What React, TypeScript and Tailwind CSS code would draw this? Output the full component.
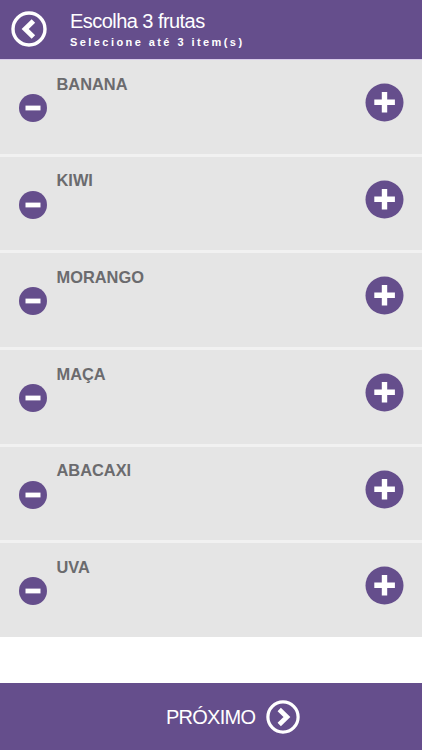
import { useState } from 'react'

const MAX_ITEMS = 3
const fruits = ['BANANA', 'KIWI', 'MORANGO', 'MAÇA', 'ABACAXI', 'UVA']

function ArrowCircle({ direction, className }: { direction: 'left' | 'right'; className: string }) {
  return (
    <svg className={className} viewBox="0 0 36 36" fill="none" stroke="#fff">
      <circle cx="18" cy="18" r="16" strokeWidth="3.4" />
      <path d={direction === 'left' ? 'M22.4 10 14.2 18l8.2 8' : 'M14 10 22.2 18l-8.2 8'} strokeWidth="5" />
    </svg>
  )
}

export default function App() {
  const [selected, setSelected] = useState<string[]>([])

  const add = (fruit: string) => {
    if (selected.length < MAX_ITEMS) setSelected([...selected, fruit])
  }

  const remove = (fruit: string) => {
    const index = selected.lastIndexOf(fruit)
    if (index >= 0) setSelected(selected.filter((_, i) => i !== index))
  }

  return (
    <div className="flex h-[750px] w-full flex-col overflow-hidden bg-white font-['Liberation_Sans',sans-serif]">
      <header className="flex h-[60px] shrink-0 items-start border-b border-[#d9cbea] bg-[#654e8c] pl-[11px] text-white">
        <button className="mt-[11px]">
          <ArrowCircle direction="left" className="h-9 w-9" />
        </button>
        <div className="ml-[23px] pt-[10px]">
          <h1 className="text-[20px] leading-[23px] tracking-[-0.55px]">Escolha 3 frutas</h1>
          <p className="mt-[3px] text-[11px] leading-[13px] font-bold tracking-[2.43px]">Selecione até 3 item(s)</p>
        </div>
      </header>

      {/* Fruit list */}
      <ul className="flex h-[577px] shrink-0 flex-col">
        {fruits.map((fruit) => (
          <li
            key={fruit}
            className="flex flex-1 items-start border-b-3 border-[#f1f1f1] bg-[#e5e5e5] pr-[18px] pl-[19px] last:border-b-0"
          >
            <button className="mt-[34px]" onClick={() => remove(fruit)}>
              <svg className="h-7 w-7" viewBox="0 0 28 28">
                <circle cx="14" cy="14" r="14" fill="#654e8c" />
                <path d="M6.5 14h15" stroke="#fff" strokeWidth="4.8" />
              </svg>
            </button>
            <span className="mt-[13.6px] ml-[9.5px] flex-1 text-[16.4px] leading-5 font-bold text-[#6b6b6e]">
              {fruit}
            </span>
            <button className="mt-[23px]" onClick={() => add(fruit)}>
              <svg className="h-[39px] w-[39px]" viewBox="0 0 39 39">
                <circle cx="19.5" cy="19.5" r="19" fill="#654e8c" />
                <path d="M9.3 19.3h20.6M19.5 9v20.6" stroke="#fff" strokeWidth="5.4" />
              </svg>
            </button>
          </li>
        ))}
      </ul>

      <footer className="mt-auto flex h-[67px] shrink-0 items-center bg-[#654e8c] pl-[166px] text-white">
        <button className="flex items-center pt-px">
          <span className="w-[100px] text-left text-[20px] leading-6 tracking-[-0.75px]">PRÓXIMO</span>
          <ArrowCircle direction="right" className="h-[34px] w-[34px]" />
        </button>
      </footer>
    </div>
  )
}
